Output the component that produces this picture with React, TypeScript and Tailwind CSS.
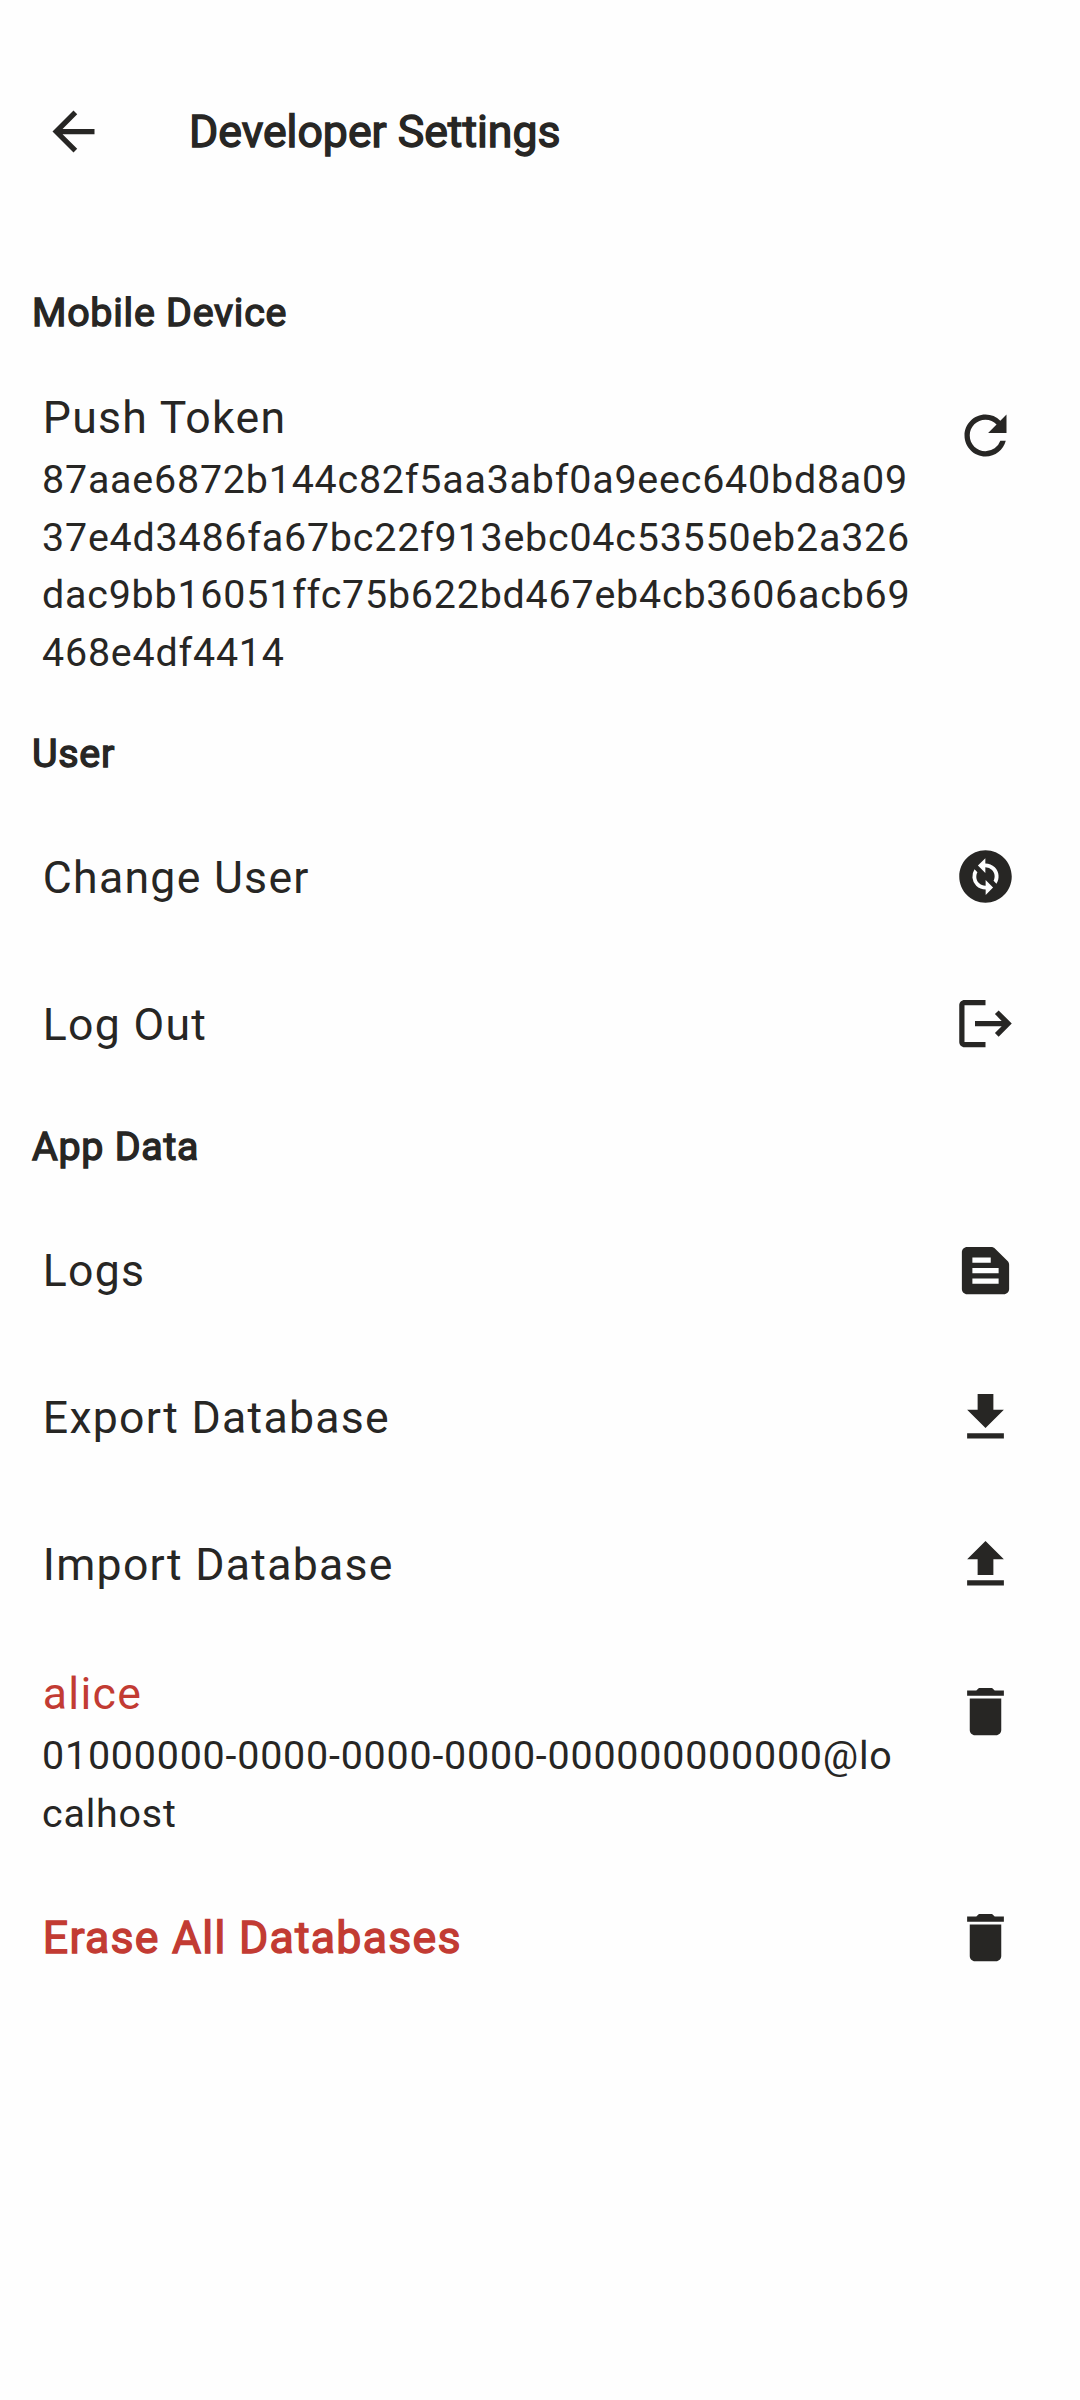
import React from 'react';
import { MdArrowBack, MdRefresh, MdChangeCircle, MdLogout, MdTextSnippet, MdFileDownload, MdFileUpload, MdDelete } from 'react-icons/md';

function Heading({ children, className = '' }: { children: React.ReactNode; className?: string }) {
  return <h2 className={`pl-8 text-[39.4px] leading-[60px] tracking-[0.75px] font-normal [-webkit-text-stroke:1.4px] ${className}`}>{children}</h2>;
}

type RowProps = {
  title: string;
  titleClass?: string;
  subtitle?: string[];
  icon: React.ReactNode;
  className: string;
};

function Row({ title, titleClass = '', subtitle, icon, className }: RowProps) {
  return (
    <div className={`flex justify-between pl-[42px] pr-[63px] ${subtitle ? 'items-start' : 'items-center'} ${className}`}>
      <div>
        <div className={`pl-[0.8px] text-[44.6px] tracking-[1.27px] whitespace-nowrap ${subtitle ? 'leading-[66px]' : 'leading-[68px]'} ${titleClass}`}>{title}</div>
        {subtitle?.map((line) => (
          <div key={line} className="text-[39.4px] leading-[57.7px] tracking-[0.8px] whitespace-nowrap">{line}</div>
        ))}
      </div>
      <div className={`text-[63px] ${subtitle ? 'mt-[19px]' : ''}`}>{icon}</div>
    </div>
  );
}

export default function App() {
  return (
    <main className="h-[2400px] w-[1080px] overflow-hidden bg-[#fefefe] font-['Roboto',sans-serif] text-[#272624]">
      <header className="flex h-[263px] items-center pl-[42px]">
        <MdArrowBack className="text-[63px]" />
        <h1 className="ml-[84px] text-[44.6px] leading-[60px] font-normal [-webkit-text-stroke:1.4px]">Developer Settings</h1>
      </header>
      <Heading className="mt-[20px]">Mobile Device</Heading>
      <Row
        className="mt-[42px] h-[339px]"
        title="Push Token"
        subtitle={['87aae6872b144c82f5aa3abf0a9eec640bd8a09', '37e4d3486fa67bc22f913ebc04c53550eb2a326', 'dac9bb16051ffc75b622bd467eb4cb3606acb69', '468e4df4414']}
        icon={<MdRefresh />}
      />
      <Heading>User</Heading>
      <Row className="mt-[19px] h-[147px]" title="Change User" titleClass="pt-[2px]" icon={<MdChangeCircle />} />
      <Row className="h-[147px]" title="Log Out" titleClass="pt-[2px]" icon={<MdLogout />} />
      <Heading className="mt-[20px]">App Data</Heading>
      <Row className="mt-[20px] h-[147px]" title="Logs" icon={<MdTextSnippet />} />
      <Row className="h-[147px]" title="Export Database" icon={<MdFileDownload />} />
      <Row className="h-[147px]" title="Import Database" icon={<MdFileUpload />} />
      <Row
        className="mt-[23px] h-[203px]"
        title="alice"
        titleClass="text-[#c23b33]"
        subtitle={['01000000-0000-0000-0000-000000000000@lo', 'calhost']}
        icon={<MdDelete />}
      />
      <Row className="h-[147px]" title="Erase All Databases" titleClass="text-[#c23b33] [-webkit-text-stroke:1.4px]" icon={<MdDelete />} />
    </main>
  );
}
